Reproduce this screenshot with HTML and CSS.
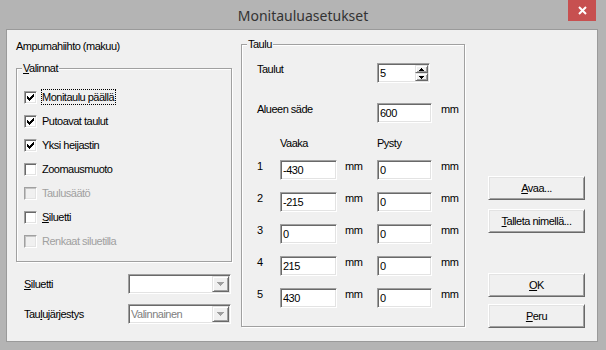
FILE: index.html
```html
<!DOCTYPE html>
<html>
<head>
<meta charset="utf-8">
<link rel="stylesheet" href="styles.css">
</head>
<body>
<div class="window">
  <div class="titlebar">
    <span class="title">Monitauluasetukset</span>
    <div class="close">
      <svg width="9" height="9" viewBox="0 0 9 9"><path d="M1 1L8 8M8 1L1 8" stroke="#fff" stroke-width="2"/></svg>
    </div>
  </div>
  <div class="client">
    <div class="col-left">
      <div class="heading">Ampumahiihto (makuu)</div>
      <div class="group group-valinnat">
        <span class="legend"><u>V</u>alinnat</span>
        <div class="check-row">
          <span class="cb"><svg width="11" height="11" viewBox="0 0 11 11"><path d="M2 4h1v3h-1zM3 5h1v3h-1zM4 6h1v3h-1zM5 5h1v3h-1zM6 4h1v3h-1zM7 3h1v3h-1zM8 2h1v3h-1z" fill="#000"/></svg></span>
          <span class="lbl focus">Monitaulu päällä</span>
        </div>
        <div class="check-row">
          <span class="cb"><svg width="11" height="11" viewBox="0 0 11 11"><path d="M2 4h1v3h-1zM3 5h1v3h-1zM4 6h1v3h-1zM5 5h1v3h-1zM6 4h1v3h-1zM7 3h1v3h-1zM8 2h1v3h-1z" fill="#000"/></svg></span>
          <span class="lbl">Putoavat taulut</span>
        </div>
        <div class="check-row">
          <span class="cb"><svg width="11" height="11" viewBox="0 0 11 11"><path d="M2 4h1v3h-1zM3 5h1v3h-1zM4 6h1v3h-1zM5 5h1v3h-1zM6 4h1v3h-1zM7 3h1v3h-1zM8 2h1v3h-1z" fill="#000"/></svg></span>
          <span class="lbl">Yksi heijastin</span>
        </div>
        <div class="check-row">
          <span class="cb"></span>
          <span class="lbl">Zoomausmuoto</span>
        </div>
        <div class="check-row disabled">
          <span class="cb"></span>
          <span class="lbl">Taulusäätö</span>
        </div>
        <div class="check-row">
          <span class="cb"></span>
          <span class="lbl"><u>S</u>iluetti</span>
        </div>
        <div class="check-row disabled">
          <span class="cb"></span>
          <span class="lbl">Renkaat siluetilla</span>
        </div>
      </div>
      <div class="combos">
        <span class="clabel"><u>S</u>iluetti</span>
        <div class="combo">
          <span class="combo-text"></span>
          <span class="drop"><svg width="7" height="4" viewBox="0 0 7 4"><path d="M0 0h7v1h-7zM1 1h5v1h-5zM2 2h3v1h-3zM3 3h1v1h-1z" fill="#a0a0a0"/></svg></span>
        </div>
        <span class="clabel">Tau<u>l</u>ujärjestys</span>
        <div class="combo">
          <span class="combo-text">Valinnainen</span>
          <span class="drop"><svg width="7" height="4" viewBox="0 0 7 4"><path d="M0 0h7v1h-7zM1 1h5v1h-5zM2 2h3v1h-3zM3 3h1v1h-1z" fill="#a0a0a0"/></svg></span>
        </div>
      </div>
    </div>

    <div class="group group-taulu">
      <span class="legend">Taulu</span>
      <div class="row row-taulut">
        <span class="rlabel span3">Taulut</span>
        <div class="spin">
          <span class="spin-text">5</span>
          <div class="spin-btns">
            <span class="spin-btn"><svg width="5" height="3" viewBox="0 0 5 3"><path d="M2 0h1v1h-1zM1 1h3v1h-3zM0 2h5v1h-5z" fill="#000"/></svg></span>
            <span class="spin-btn"><svg width="5" height="3" viewBox="0 0 5 3"><path d="M0 0h5v1h-5zM1 1h3v1h-3zM2 2h1v1h-1z" fill="#000"/></svg></span>
          </div>
        </div>
      </div>
      <div class="row row-alue">
        <span class="rlabel span3">Alueen säde</span>
        <span class="edit">600</span>
        <span class="mm mm2">mm</span>
      </div>
      <div class="row row-head">
        <span></span>
        <span class="rlabel">Vaaka</span>
        <span></span>
        <span class="rlabel">Pysty</span>
      </div>
      <div class="row row-n row-first">
        <span class="rlabel">1</span>
        <span class="edit">-430</span>
        <span class="mm">mm</span>
        <span class="edit">0</span>
        <span class="mm mm2">mm</span>
      </div>
      <div class="row row-n">
        <span class="rlabel">2</span>
        <span class="edit">-215</span>
        <span class="mm">mm</span>
        <span class="edit">0</span>
        <span class="mm mm2">mm</span>
      </div>
      <div class="row row-n">
        <span class="rlabel">3</span>
        <span class="edit">0</span>
        <span class="mm">mm</span>
        <span class="edit">0</span>
        <span class="mm mm2">mm</span>
      </div>
      <div class="row row-n">
        <span class="rlabel">4</span>
        <span class="edit">215</span>
        <span class="mm">mm</span>
        <span class="edit">0</span>
        <span class="mm mm2">mm</span>
      </div>
      <div class="row row-n">
        <span class="rlabel">5</span>
        <span class="edit">430</span>
        <span class="mm">mm</span>
        <span class="edit">0</span>
        <span class="mm mm2">mm</span>
      </div>
    </div>

    <div class="buttons">
      <div class="btn"><span><u>A</u>vaa...</span></div>
      <div class="btn btn-save"><span><u>T</u>alleta nimellä...</span></div>
      <div class="btn btn-ok"><span><u>O</u>K</span></div>
      <div class="btn btn-cancel"><span><u>P</u>eru</span></div>
    </div>
  </div>
</div>
</body>
</html>
```

FILE: styles.css
```css
html, body {
  margin: 0;
  padding: 0;
}

body {
  font-family: "Liberation Sans", Arial, sans-serif;
  font-size: 11px;
  line-height: 13px;
  letter-spacing: -0.5px;
  color: #000;
  background: #b4b4b4;
}

u {
  text-decoration: underline;
  text-underline-offset: 1px;
}

.window {
  width: 606px;
  height: 350px;
  background: #b4b4b4;
  display: flex;
  flex-direction: column;
}

.titlebar {
  height: 29px;
  flex: none;
  display: grid;
  grid-template-columns: 1fr auto 1fr;
  align-items: start;
}

.title {
  grid-column: 2;
  font-family: "Noto Sans", "Open Sans", sans-serif;
  font-size: 14px;
  line-height: 31px;
  letter-spacing: 0;
  color: #333;
}

.close {
  grid-column: 3;
  justify-self: end;
  margin-right: 10px;
  width: 28px;
  height: 21px;
  background: #c75050;
  display: flex;
  align-items: center;
  justify-content: center;
}

.close svg {
  display: block;
}

.client {
  flex: 1;
  margin: 0 8px 8px 6px;
  border: 1px solid #9a9a9a;
  background: #f0f0f0;
  display: flex;
  align-items: flex-start;
}

.col-left {
  margin-left: 9px;
  padding-top: 10px;
  width: 216px;
}

.heading {
  line-height: 13px;
}

.group {
  position: relative;
  box-sizing: border-box;
  border: 1px solid #a0a0a0;
  box-shadow: inset 1px 1px #fff, 1px 1px #fff;
}

.legend {
  position: absolute;
  top: -7px;
  left: 5px;
  padding: 0 1px;
  background: #f0f0f0;
  line-height: 13px;
}

.group-valinnat {
  margin-top: 15px;
  width: 216px;
  padding: 16px 0 8px 7px;
}

.check-row {
  height: 24px;
  display: flex;
  align-items: center;
}

.cb {
  width: 13px;
  height: 13px;
  box-sizing: border-box;
  flex: none;
  border: 1px solid;
  border-color: #a0a0a0 #fff #fff #a0a0a0;
  box-shadow: inset 1px 1px #696969, inset -1px -1px #e3e3e3;
  background: #fff;
}

.cb svg {
  display: block;
}

.lbl {
  margin-left: 4px;
  border: 1px dotted transparent;
  line-height: 14px;
  padding-right: 1px;
}

.lbl.focus {
  border-color: #000;
}

.disabled .lbl {
  color: #a0a0a0;
}

.disabled .cb {
  background: #f0f0f0;
  box-shadow: inset 1px 1px #c4c4c4, inset -1px -1px #e3e3e3;
}

.combos {
  margin-top: 12px;
  display: grid;
  grid-template-columns: 112px 103px;
  grid-auto-rows: 20px;
  row-gap: 10px;
  align-items: center;
}

.clabel {
  padding-left: 8px;
}

.combo {
  height: 20px;
  box-sizing: border-box;
  border: 1px solid;
  border-color: #a0a0a0 #fff #fff #a0a0a0;
  box-shadow: inset 1px 1px #696969, inset -1px -1px #e3e3e3;
  background: #fff;
  padding: 1px;
  display: flex;
}

.combo-text {
  flex: 1;
  color: #808080;
  line-height: 16px;
  padding-left: 1px;
}

.drop {
  width: 17px;
  box-sizing: border-box;
  border: 1px solid;
  border-color: #e3e3e3 #696969 #696969 #e3e3e3;
  box-shadow: inset 1px 1px #fff, inset -1px -1px #a0a0a0;
  background: #f0f0f0;
  display: flex;
  align-items: center;
  justify-content: center;
}

.drop svg {
  display: block;
}

.group-taulu {
  margin-left: 9px;
  margin-top: 14px;
  width: 224px;
  padding: 18px 0 18px 15px;
}

.row {
  display: grid;
  grid-template-columns: 23px 57px 40px 55px 1fr;
  height: 20px;
  align-items: start;
}

.span3 {
  grid-column: 1 / 4;
}

.rlabel {
  line-height: 13px;
}

.row-alue {
  margin-top: 20px;
}

.row-head {
  margin-top: 14px;
  height: 13px;
}

.row-n {
  margin-top: 12px;
}

.row-n.row-first {
  margin-top: 10px;
}

.edit {
  height: 20px;
  box-sizing: border-box;
  border: 1px solid;
  border-color: #a0a0a0 #fff #fff #a0a0a0;
  box-shadow: inset 1px 1px #696969, inset -1px -1px #e3e3e3;
  background: #fff;
  padding-left: 2px;
  line-height: 18px;
}

.mm {
  padding-left: 8px;
  line-height: 13px;
}

.mm2 {
  padding-left: 9px;
}

.spin {
  width: 53px;
  height: 20px;
  box-sizing: border-box;
  border: 1px solid;
  border-color: #a0a0a0 #fff #fff #a0a0a0;
  box-shadow: inset 1px 1px #696969, inset -1px -1px #e3e3e3;
  background: #fff;
  padding: 1px;
  display: flex;
}

.spin-text {
  flex: 1;
  line-height: 16px;
  padding-left: 1px;
}

.spin-btns {
  width: 13px;
  display: flex;
  flex-direction: column;
}

.spin-btn {
  flex: 1;
  box-sizing: border-box;
  border: 1px solid;
  border-color: #e3e3e3 #696969 #696969 #e3e3e3;
  box-shadow: inset 1px 1px #fff, inset -1px -1px #a0a0a0;
  background: #f0f0f0;
  display: flex;
  align-items: center;
  justify-content: center;
}

.spin-btn svg {
  display: block;
}

.buttons {
  margin-left: 23px;
  margin-top: 146px;
  width: 97px;
  display: flex;
  flex-direction: column;
}

.btn {
  height: 24px;
  box-sizing: border-box;
  border: 1px solid;
  border-color: #fff #696969 #696969 #fff;
  box-shadow: inset 1px 1px #e3e3e3, inset -1px -1px #a0a0a0;
  background: #f0f0f0;
  display: flex;
  align-items: center;
  justify-content: center;
}

.btn-save {
  margin-top: 9px;
}

.btn-ok {
  margin-top: 40px;
}

.btn-cancel {
  margin-top: 7px;
}
```
